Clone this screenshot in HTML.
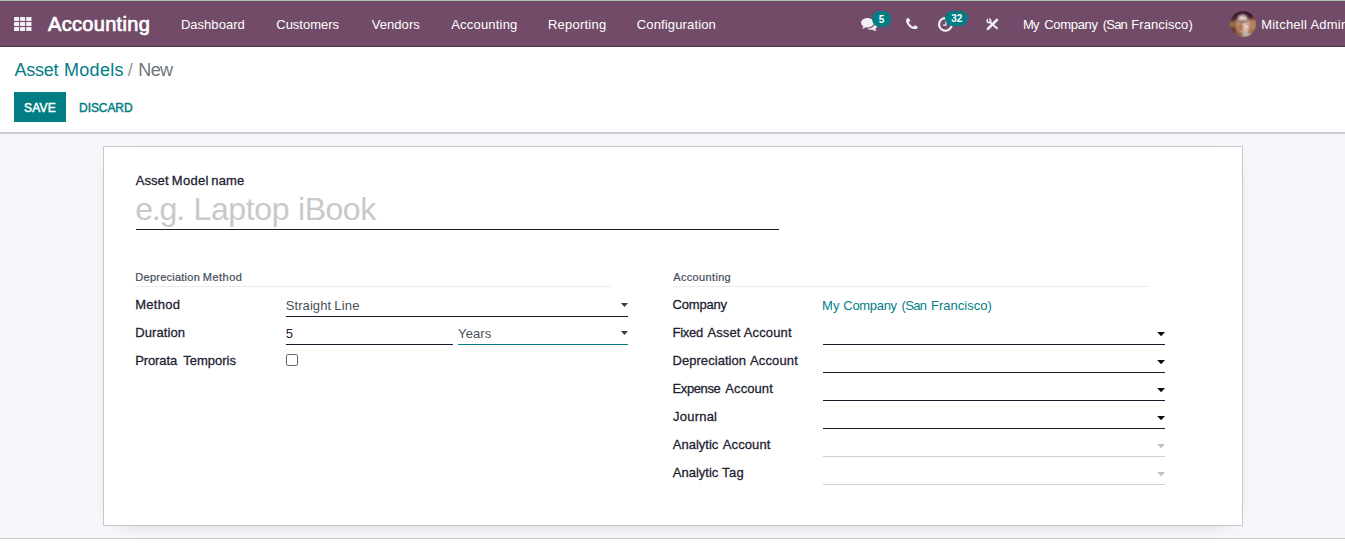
<!DOCTYPE html>
<html lang="en">
<head>
<meta charset="utf-8">
<title>Odoo - Asset Models / New</title>
<style>
  html, body { margin: 0; padding: 0; }
  body {
    width: 1345px; height: 548px; overflow: hidden; position: relative;
    background: #f6f7fa;
    font-family: "Liberation Sans", Arial, sans-serif;
    font-size: 13px; color: #212529;
  }
  .t { position: absolute; white-space: nowrap; display: block; }
  .abs { position: absolute; }
  .topline { left: 0; top: 0; width: 1345px; height: 1px; background: #a9c4aa; }
  .navbar { left: 0; top: 1px; width: 1345px; height: 44px; background: #724b68; border-top: 1px solid #6e4363; border-bottom: 1px solid #4d3347; overflow: hidden; }
  .cp { left: 0; top: 47px; width: 1345px; height: 85px; background: #fff; border-bottom: 1px solid #c5c8d0; }
  .cpshadow { left: 0; top: 133px; width: 1345px; height: 1px; background: #cdd0d7; }
  .btn-save { left: 14px; top: 92px; width: 52px; height: 30px; background: #017e84; }
  .sheet { left: 103px; top: 146px; width: 1138px; height: 378px; background: #fff; border: 1px solid #c7c9d1; box-shadow: 0 5px 20px -15px rgba(0,0,0,.4); }
  .chatter { left: 0; top: 538px; width: 1345px; height: 10px; background: #fff; border-top: 1px solid #c7c9d1; }
  .ln { position: absolute; height: 1px; background: #151a2b; }
  .ln.sep { background: #ececec; }
  .ln.lt { background: #cfcfcf; }
  .ln.teal { background: #017e84; }
  .caret { position: absolute; width: 8px; height: 4.3px; background: #0b0b0d; clip-path: polygon(0 0, 100% 0, 50% 100%); }
  .caret.lt { background: #c2c2c2; }
  .caret.sel { width: 7.2px; height: 4.1px; background: #36434f; }
  .badge { position: absolute; height: 16px; border-radius: 8px; background: #017e84; }
  .chk { left: 286px; top: 354px; width: 10px; height: 10px; border: 1px solid #6b6b6b; border-radius: 2px; background: #fff; }
</style>
</head>
<body>
  <div class="abs topline"></div>

  <!-- ===== top navigation bar ===== -->
  <div class="abs navbar"></div>
  <svg class="abs" style="left:13.8px;top:17px" width="18" height="14" viewBox="0 0 18 14">
    <g fill="#f3eef2">
      <rect x="0" y="0" width="5.1" height="4" rx=".5"/><rect x="6.05" y="0" width="5.1" height="4" rx=".5"/><rect x="12.2" y="0" width="5.3" height="4" rx=".5"/>
      <rect x="0" y="5" width="5.1" height="3.9" rx=".5"/><rect x="6.05" y="5" width="5.1" height="3.9" rx=".5"/><rect x="12.2" y="5" width="5.3" height="3.9" rx=".5"/>
      <rect x="0" y="10" width="5.1" height="3.9" rx=".5"/><rect x="6.05" y="10" width="5.1" height="3.9" rx=".5"/><rect x="12.2" y="10" width="5.3" height="3.9" rx=".5"/>
    </g>
  </svg>
  <span class="t" style="left:48.03px;top:14.00px;font-size:20px;line-height:20px;color:#ffffff;letter-spacing:0.316px;-webkit-text-stroke:0.7px #ffffff;">Accounting</span>
  <span class="t" style="left:180.88px;top:18.00px;font-size:13px;line-height:13px;color:#ffffff;letter-spacing:0.036px;">Dashboard</span><span class="t" style="left:276.25px;top:18.00px;font-size:13px;line-height:13px;color:#ffffff;">Customers</span><span class="t" style="left:371.73px;top:18.00px;font-size:13px;line-height:13px;color:#ffffff;letter-spacing:0.057px;">Vendors</span><span class="t" style="left:451.20px;top:18.00px;font-size:13px;line-height:13px;color:#ffffff;letter-spacing:0.199px;">Accounting</span><span class="t" style="left:547.88px;top:18.00px;font-size:13px;line-height:13px;color:#ffffff;letter-spacing:0.241px;">Reporting</span><span class="t" style="left:636.80px;top:18.00px;font-size:13px;line-height:13px;color:#ffffff;letter-spacing:0.143px;">Configuration</span>

  <!-- systray: comments icon -->
  <svg class="abs" style="left:860.5px;top:18px" width="16.6" height="13" viewBox="0 0 1792 1408" preserveAspectRatio="none">
    <path fill="#f3eef2" d="M1408 512q0 139-94 257t-256.500 186.500-353.500 68.500q-86 0-176-16-124 88-278 128-36 9-86 16h-3q-11 0-20.500-8t-11.500-21q-1-3-1-6.500t.5-6.500 2-6l2.500-5 3.500-5.500 4-5 4.500-5 4-4.500q5-6 23-25t26-29.500 22.500-29 25-38.500 20.500-44q-124-72-195-177t-71-224q0-139 94-257t256.500-186.500 353.500-68.500 353.500 68.500 256.500 186.500 94 257zm384 256q0 120-71 224.500t-195 176.500q10 24 20.500 44t25 38.500 22.500 29 26 29.500 23 25q1 1 4 4.500t4.500 5 4 5 3.500 5.500l2.500 5 2 6 .5 6.500-1 6.500q-3 14-13 22t-22 7q-50-7-86-16-154-40-278-128-90 16-176 16-271 0-472-132 58 4 88 4 161 0 309-45t264-129q125-92 192-212t67-254q0-77-23-152 129 71 204 178t75 230z"/>
  </svg>
  <div class="badge" style="left:872px;top:11px;width:19px;height:16px;border-radius:8px"></div>
  <span class="t" style="left:878.63px;top:14.50px;font-size:10px;line-height:10px;color:#ffffff;font-weight:700;">5</span>
  <!-- phone -->
  <svg class="abs" style="left:906.3px;top:18px" width="11.8" height="11.4" viewBox="0 0 1408 1408" preserveAspectRatio="none">
    <path fill="#f3eef2" d="M1408 1112q0 27-10 70.500t-21 68.500q-21 50-122 106-94 51-186 51-27 0-53-3.500t-57.500-12.500-47-14.500-55.500-20.500-49-18q-98-35-175-83-127-79-264-216t-216-264q-48-77-83-175-3-9-18-49t-20.500-55.500-14.500-47-12.500-57.500-3.500-53q0-92 51-186 56-101 106-122 25-11 68.500-21t70.500-10q14 0 21 3 18 6 53 76 11 19 30 54t35 63.500 31 53.500q3 4 17.500 25t21.500 35.500 7 28.500q0 20-28.500 50t-62 55-62 53-28.500 46q0 9 5 22.500t8.500 20.500 14 24 11.500 19q76 137 174 235t235 174q2 1 19 11.500t24 14 20.500 8.500 22.500 5q18 0 46-28.500t53-62 55-62 50-28.500q14 0 28.500 7t35.500 21.500 25 17.500q25 15 53.500 31t63.500 35 54 30q70 35 76 53 3 7 3 21z"/>
  </svg>
  <!-- activity clock -->
  <svg class="abs" style="left:938px;top:16.8px" width="14.8" height="14.8" viewBox="0 128 1536 1536">
    <path fill="#f3eef2" d="M896 544v448q0 14-9 23t-23 9h-320q-14 0-23-9t-9-23v-64q0-14 9-23t23-9h224v-352q0-14 9-23t23-9h64q14 0 23 9t9 23zM1312 896q0-148-73-273t-198-198-273-73-273 73-198 198-73 273 73 273 198 198 273 73 273-73 198-198 73-273zM1536 896q0 209-103 385.500t-279.500 279.500-385.500 103-385.500-103-279.500-279.500-103-385.500 103-385.500 279.500-279.500 385.500-103 385.500 103 279.500 279.500 103 385.500z"/>
  </svg>
  <div class="badge" style="left:945px;top:11px;width:23px;height:15px;border-radius:7.5px"></div>
  <span class="t" style="left:951.25px;top:13.50px;font-size:10px;line-height:10px;color:#ffffff;font-weight:700;letter-spacing:-0.093px;">32</span>
  <!-- studio icon (wrench crossed with pencil) -->
  <svg class="abs" style="left:985.5px;top:17.5px" width="14" height="13" viewBox="0 0 14 13">
    <g stroke="#f3eef2" fill="none">
      <path stroke-width="2" stroke-linecap="butt" d="M3.6 3.7 L11.5 10.85"/>
      <circle cx="2.9" cy="2.85" r="1.7" stroke-width="1.7"/>
    </g>
    <path fill="#724b68" transform="rotate(-18 2.9 2.85)" d="M2.3 -0.4 L3.5 -0.4 L3.5 2.4 L2.3 2.4 Z"/>
    <path fill="#f3eef2" d="M10.8 0.35 L12.55 2.25 L2.8 11.74 L0.45 12.25 L1.02 9.85 Z"/>
  </svg>
  <span class="t" style="left:1022.90px;top:18.00px;font-size:13px;line-height:13px;color:#ffffff;letter-spacing:-0.753px;">My</span> <span class="t" style="left:1044.25px;top:18.00px;font-size:13px;line-height:13px;color:#ffffff;letter-spacing:-0.315px;">Company</span> <span class="t" style="left:1102.69px;top:18.00px;font-size:13px;line-height:13px;color:#ffffff;letter-spacing:-0.778px;">(San</span> <span class="t" style="left:1131.30px;top:18.00px;font-size:13px;line-height:13px;color:#ffffff;letter-spacing:0.086px;">Francisco)</span>
  <!-- avatar -->
  <svg class="abs" style="left:1230px;top:11px" width="26" height="26" viewBox="0 0 26 26">
    <defs>
      <clipPath id="avc"><circle cx="13" cy="13" r="13"/></clipPath>
      <filter id="avb" x="-20%" y="-20%" width="140%" height="140%"><feGaussianBlur stdDeviation="0.8"/></filter>
      <filter id="avn" x="0" y="0" width="100%" height="100%">
        <feTurbulence type="fractalNoise" baseFrequency="0.6" numOctaves="2" seed="11" result="n"/>
        <feColorMatrix in="n" type="matrix" values="0 0 0 0 0.30  0 0 0 0 0.14  0 0 0 0 0.12  1.8 0 0 0 -0.75"/>
      </filter>
    </defs>
    <g clip-path="url(#avc)">
      <rect width="26" height="26" fill="#a27349"/>
      <g filter="url(#avb)">
        <ellipse cx="13" cy="3" rx="13.5" ry="6.2" fill="#36192b"/>
        <ellipse cx="2.5" cy="8" rx="3" ry="3.2" fill="#4a2430"/>
        <ellipse cx="23" cy="7" rx="2.6" ry="2.6" fill="#5a3034"/>
        <ellipse cx="3" cy="20" rx="3.2" ry="6" fill="#60302f"/>
        <ellipse cx="4" cy="13.4" rx="3.6" ry="2.8" fill="#9b6f45"/>
        <ellipse cx="22.3" cy="14" rx="3.6" ry="5.4" fill="#b48662"/>
        <ellipse cx="13.2" cy="14.6" rx="6.4" ry="9.8" fill="#d6b09e"/>
        <ellipse cx="12.4" cy="7.2" rx="4" ry="2.9" fill="#efddd5"/>
        <ellipse cx="15.8" cy="15.2" rx="2.3" ry="5" fill="#ecd6cc"/>
        <ellipse cx="10.2" cy="16.4" rx="2.6" ry="4" fill="#b0774e"/>
        <ellipse cx="12.8" cy="10.6" rx="5.4" ry="1.2" fill="#6f3f40"/>
        <ellipse cx="16.4" cy="23.8" rx="4.4" ry="2" fill="#b5c4bb"/>
        <ellipse cx="8.6" cy="23.4" rx="4" ry="2.4" fill="#83593e"/>
      </g>
      <rect width="26" height="26" filter="url(#avn)" opacity=".6"/>
    </g>
  </svg>
  <span class="t" style="left:1261.18px;top:18.00px;font-size:13px;line-height:13px;color:#ffffff;letter-spacing:0.224px;">Mitchell</span> <span class="t" style="left:1310.44px;top:18.00px;font-size:13px;line-height:13px;color:#ffffff;letter-spacing:0.220px;">Admin</span>

  <!-- ===== control panel ===== -->
  <div class="abs cp"></div>
  <div class="abs cpshadow"></div>
  <span class="t" style="left:14.59px;top:60.80px;font-size:18px;line-height:18px;color:#017e84;letter-spacing:-0.284px;">Asset</span> <span class="t" style="left:63.96px;top:60.80px;font-size:18px;line-height:18px;color:#017e84;letter-spacing:0.327px;">Models</span><span class="t" style="left:127.83px;top:60.80px;font-size:18px;line-height:18px;color:#8f959b;">/</span><span class="t" style="left:138.25px;top:60.80px;font-size:18px;line-height:18px;color:#6c757d;letter-spacing:-0.591px;">New</span>
  <div class="abs btn-save"></div>
  <span class="t" style="left:23.99px;top:102.00px;font-size:12px;line-height:12px;color:#ffffff;letter-spacing:0.204px;-webkit-text-stroke:0.45px #ffffff;">SAVE</span><span class="t" style="left:79.08px;top:102.00px;font-size:12px;line-height:12px;color:#017e84;letter-spacing:-0.086px;-webkit-text-stroke:0.45px #017e84;">DISCARD</span>

  <!-- ===== form sheet ===== -->
  <div class="abs sheet"></div>
  <div class="abs chatter"></div>

  <span class="t" style="left:135.73px;top:174.00px;font-size:13px;line-height:13px;color:#1d2130;letter-spacing:0.067px;-webkit-text-stroke:0.28px #1d2130;">Asset</span> <span class="t" style="left:171.87px;top:174.00px;font-size:13px;line-height:13px;color:#1d2130;letter-spacing:0.280px;-webkit-text-stroke:0.28px #1d2130;">Model</span> <span class="t" style="left:211.37px;top:174.00px;font-size:13px;line-height:13px;color:#1d2130;letter-spacing:0.139px;-webkit-text-stroke:0.28px #1d2130;">name</span>
  <span class="t" style="left:135.27px;top:193.30px;font-size:32px;line-height:32px;color:#c9c9c9;letter-spacing:-1.201px;">e.g.</span> <span class="t" style="left:193.54px;top:193.30px;font-size:32px;line-height:32px;color:#c9c9c9;letter-spacing:-0.379px;">Laptop</span> <span class="t" style="left:298.10px;top:193.30px;font-size:32px;line-height:32px;color:#c9c9c9;letter-spacing:-0.499px;">iBook</span>
  <div class="ln" style="left:136px;top:229px;width:643px"></div>

  <!-- left group -->
  <span class="t" style="left:135.34px;top:271.70px;font-size:11px;line-height:11px;color:#454c5c;letter-spacing:0.246px;-webkit-text-stroke:0.22px #454c5c;">Depreciation</span> <span class="t" style="left:202.87px;top:271.70px;font-size:11px;line-height:11px;color:#454c5c;letter-spacing:0.475px;-webkit-text-stroke:0.22px #454c5c;">Method</span>
  <div class="ln sep" style="left:136px;top:286px;width:476px"></div>
  <span class="t" style="left:135.20px;top:298.00px;font-size:13px;line-height:13px;color:#1d2130;letter-spacing:0.291px;-webkit-text-stroke:0.28px #1d2130;">Method</span><span class="t" style="left:285.77px;top:299.20px;font-size:13px;line-height:13px;color:#495057;letter-spacing:0.075px;">Straight</span> <span class="t" style="left:334.16px;top:299.20px;font-size:13px;line-height:13px;color:#495057;letter-spacing:0.256px;">Line</span>
  <div class="ln" style="left:286px;top:316px;width:342px"></div>
  <div class="caret sel" style="left:620.9px;top:302.9px"></div>
  <span class="t" style="left:135.20px;top:326.00px;font-size:13px;line-height:13px;color:#1d2130;letter-spacing:0.091px;-webkit-text-stroke:0.28px #1d2130;">Duration</span><span class="t" style="left:285.66px;top:327.00px;font-size:13px;line-height:13px;color:#212529;">5</span><span class="t" style="left:458.07px;top:327.00px;font-size:13px;line-height:13px;color:#495057;letter-spacing:0.107px;">Years</span>
  <div class="ln" style="left:286px;top:344px;width:167px"></div>
  <div class="ln teal" style="left:458px;top:344px;width:170px"></div>
  <div class="caret sel" style="left:620.9px;top:330.9px"></div>
  <span class="t" style="left:135.20px;top:354.00px;font-size:13px;line-height:13px;color:#1d2130;letter-spacing:-0.108px;-webkit-text-stroke:0.28px #1d2130;">Prorata</span> <span class="t" style="left:183.34px;top:354.00px;font-size:13px;line-height:13px;color:#1d2130;letter-spacing:-0.016px;-webkit-text-stroke:0.28px #1d2130;">Temporis</span>
  <div class="abs chk"></div>

  <!-- right group -->
  <span class="t" style="left:673.28px;top:271.70px;font-size:11px;line-height:11px;color:#454c5c;letter-spacing:0.338px;-webkit-text-stroke:0.22px #454c5c;">Accounting</span>
  <div class="ln sep" style="left:673px;top:286px;width:476px"></div>
  <span class="t" style="left:672.60px;top:298.00px;font-size:13px;line-height:13px;color:#1d2130;letter-spacing:-0.200px;-webkit-text-stroke:0.28px #1d2130;">Company</span><span class="t" style="left:822.06px;top:299.20px;font-size:13px;line-height:13px;color:#017e84;letter-spacing:0.130px;">My</span> <span class="t" style="left:843.36px;top:299.20px;font-size:13px;line-height:13px;color:#017e84;letter-spacing:-0.317px;">Company</span> <span class="t" style="left:901.58px;top:299.20px;font-size:13px;line-height:13px;color:#017e84;letter-spacing:-0.654px;">(San</span> <span class="t" style="left:930.98px;top:299.20px;font-size:13px;line-height:13px;color:#017e84;letter-spacing:0.024px;">Francisco)</span>
  <span class="t" style="left:672.48px;top:326.00px;font-size:13px;line-height:13px;color:#1d2130;letter-spacing:-0.267px;-webkit-text-stroke:0.28px #1d2130;">Fixed</span> <span class="t" style="left:707.54px;top:326.00px;font-size:13px;line-height:13px;color:#1d2130;letter-spacing:0.074px;-webkit-text-stroke:0.28px #1d2130;">Asset</span> <span class="t" style="left:743.75px;top:326.00px;font-size:13px;line-height:13px;color:#1d2130;letter-spacing:0.130px;-webkit-text-stroke:0.28px #1d2130;">Account</span>
  <div class="ln" style="left:823px;top:344px;width:342px"></div>
  <div class="caret" style="left:1157.1px;top:331.9px"></div>
  <span class="t" style="left:672.46px;top:354.00px;font-size:13px;line-height:13px;color:#1d2130;letter-spacing:0.057px;-webkit-text-stroke:0.28px #1d2130;">Depreciation</span> <span class="t" style="left:749.94px;top:354.00px;font-size:13px;line-height:13px;color:#1d2130;letter-spacing:0.141px;-webkit-text-stroke:0.28px #1d2130;">Account</span>
  <div class="ln" style="left:823px;top:372px;width:342px"></div>
  <div class="caret" style="left:1157.1px;top:359.9px"></div>
  <span class="t" style="left:672.46px;top:382.00px;font-size:13px;line-height:13px;color:#1d2130;letter-spacing:-0.370px;-webkit-text-stroke:0.28px #1d2130;">Expense</span> <span class="t" style="left:725.34px;top:382.00px;font-size:13px;line-height:13px;color:#1d2130;letter-spacing:0.077px;-webkit-text-stroke:0.28px #1d2130;">Account</span>
  <div class="ln" style="left:823px;top:400px;width:342px"></div>
  <div class="caret" style="left:1157.1px;top:387.9px"></div>
  <span class="t" style="left:673.10px;top:410.00px;font-size:13px;line-height:13px;color:#1d2130;letter-spacing:0.209px;-webkit-text-stroke:0.28px #1d2130;">Journal</span>
  <div class="ln" style="left:823px;top:428px;width:342px"></div>
  <div class="caret" style="left:1157.1px;top:415.9px"></div>
  <span class="t" style="left:672.75px;top:438.00px;font-size:13px;line-height:13px;color:#1d2130;letter-spacing:0.011px;-webkit-text-stroke:0.28px #1d2130;">Analytic</span> <span class="t" style="left:722.73px;top:438.00px;font-size:13px;line-height:13px;color:#1d2130;letter-spacing:0.125px;-webkit-text-stroke:0.28px #1d2130;">Account</span>
  <div class="ln lt" style="left:823px;top:456px;width:342px"></div>
  <div class="caret lt" style="left:1157.1px;top:443.9px"></div>
  <span class="t" style="left:672.75px;top:466.00px;font-size:13px;line-height:13px;color:#1d2130;letter-spacing:0.011px;-webkit-text-stroke:0.28px #1d2130;">Analytic</span> <span class="t" style="left:722.11px;top:466.00px;font-size:13px;line-height:13px;color:#1d2130;letter-spacing:0.330px;-webkit-text-stroke:0.28px #1d2130;">Tag</span>
  <div class="ln lt" style="left:823px;top:484px;width:342px"></div>
  <div class="caret lt" style="left:1157.1px;top:471.9px"></div>
</body>
</html>
